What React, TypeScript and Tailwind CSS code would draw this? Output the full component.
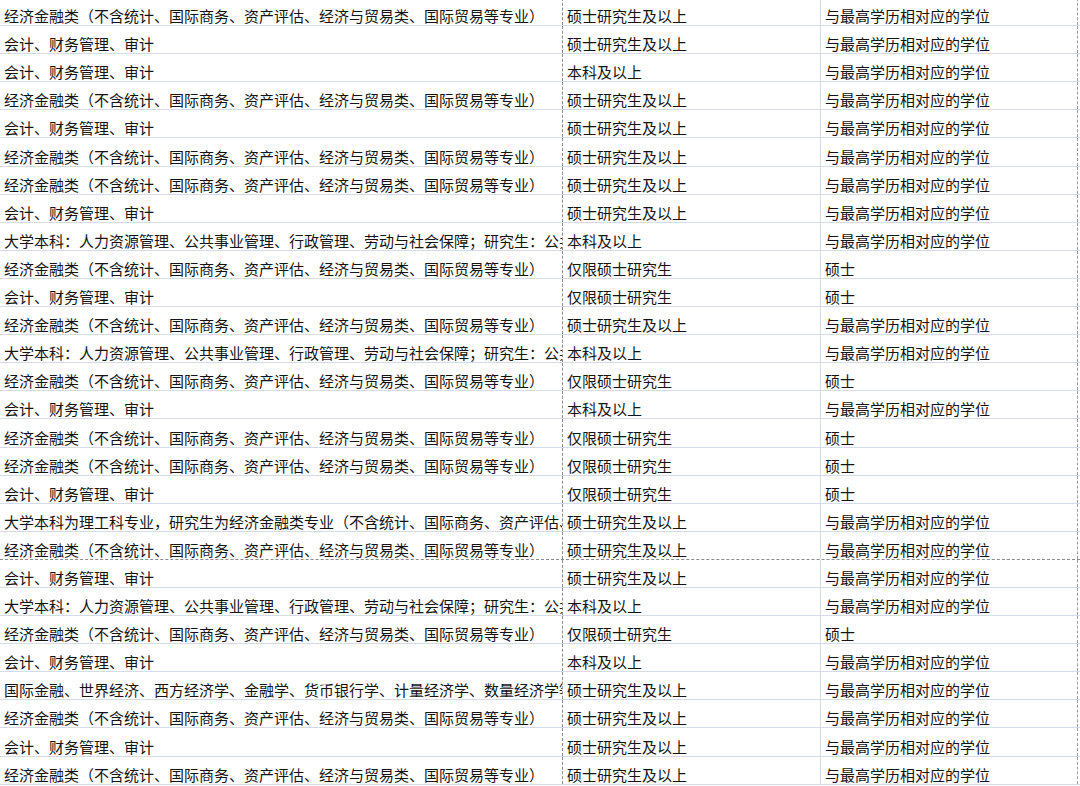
import React from 'react';

const JJ = '经济金融类（不含统计、国际商务、资产评估、经济与贸易类、国际贸易等专业）';
const KJ = '会计、财务管理、审计';
const RL = '大学本科：人力资源管理、公共事业管理、行政管理、劳动与社会保障；研究生：公共管理类';
const LG = '大学本科为理工科专业，研究生为经济金融类专业（不含统计、国际商务、资产评估、经济与贸易类）';
const GJ = '国际金融、世界经济、西方经济学、金融学、货币银行学、计量经济学、数量经济学等';

const SS = '硕士研究生及以上';
const BK = '本科及以上';
const XS = '仅限硕士研究生';
const ZG = '与最高学历相对应的学位';
const SH = '硕士';

const rows: [string, string, string][] = [
  [JJ, SS, ZG],
  [KJ, SS, ZG],
  [KJ, BK, ZG],
  [JJ, SS, ZG],
  [KJ, SS, ZG],
  [JJ, SS, ZG],
  [JJ, SS, ZG],
  [KJ, SS, ZG],
  [RL, BK, ZG],
  [JJ, XS, SH],
  [KJ, XS, SH],
  [JJ, SS, ZG],
  [RL, BK, ZG],
  [JJ, XS, SH],
  [KJ, BK, ZG],
  [JJ, XS, SH],
  [JJ, XS, SH],
  [KJ, XS, SH],
  [LG, SS, ZG],
  [JJ, SS, ZG],
  [KJ, SS, ZG],
  [RL, BK, ZG],
  [JJ, XS, SH],
  [KJ, BK, ZG],
  [GJ, SS, ZG],
  [JJ, SS, ZG],
  [KJ, SS, ZG],
  [JJ, SS, ZG],
];

// one spreadsheet cell, text sits on the bottom like in Excel
const Cell: React.FC<{ children?: React.ReactNode; className?: string }> = ({ children, className = '' }) => (
  <div className={`h-full flex items-end overflow-hidden whitespace-nowrap pl-[4px] leading-[19px] ${className}`}>
    <span className="block">{children}</span>
  </div>
);

const App: React.FC = () => {
  return (
    <div
      lang="zh-CN"
      className="w-[1080px] h-[786px] overflow-hidden bg-white text-[15px] text-[#141414]"
      style={{ fontFamily: '"Noto Sans CJK SC", "Noto Sans", sans-serif' }}
    >
      <div className="mt-[-2px]">
        {rows.map((r, i) => (
          <div
            key={i}
            className={`grid grid-cols-[563px_258px_257px_1fr] h-[28.1px] border-b ${
              i === 19 ? 'border-dashed border-[#8c8c8c]' : 'border-[#d5dbe8]'
            }`}
          >
            <Cell className="border-r border-[#8c8c8c] [border-right-style:dashed]">{r[0]}</Cell>
            <Cell className="border-r border-[#d5dbe8]">{r[1]}</Cell>
            <Cell className="border-r border-[#9a9a9a] [border-right-style:dashed]">{r[2]}</Cell>
            <Cell />
          </div>
        ))}
      </div>
    </div>
  );
};

export default App;
